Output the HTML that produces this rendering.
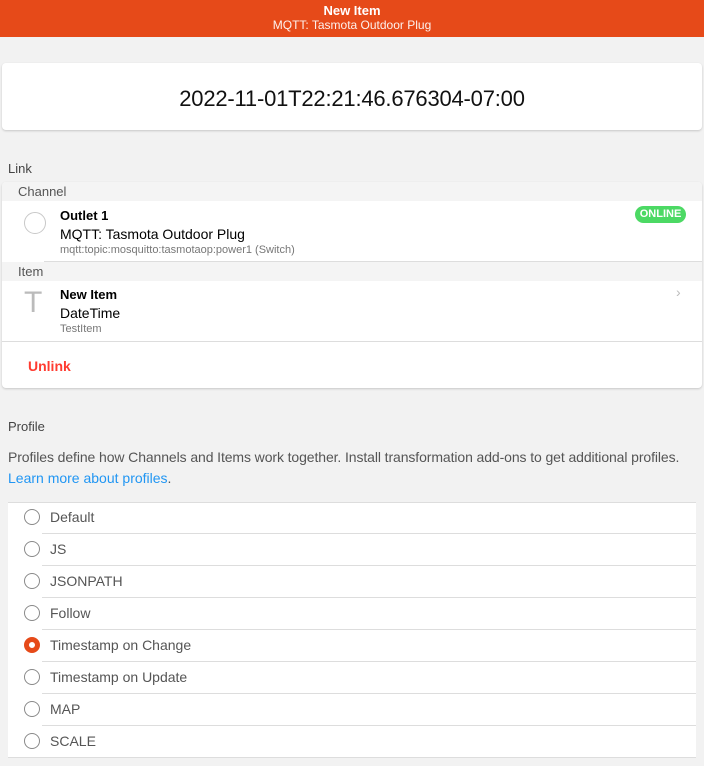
<!DOCTYPE html>
<html><head><meta charset="utf-8"><style>
*{box-sizing:border-box;margin:0;padding:0}
body{width:704px;height:766px;background:#f2f2f2;font-family:"Liberation Sans",sans-serif;position:relative;overflow:hidden;color:#000}
.a{position:absolute;white-space:nowrap}
.hdr{position:absolute;left:0;top:0;width:704px;height:37px;background:#e64a19;color:#fff;text-align:center}
.card{position:absolute;background:#fff;border-radius:4px;box-shadow:0 1px 2px rgba(0,0,0,.18)}
.band{position:absolute;left:0;width:700px;height:19px;background:#f4f4f4;font-size:13px;color:#555;padding-left:16px;line-height:20px}
.rad{position:absolute;left:24px;width:16px;height:16px;border:1.5px solid #8a8a8a;border-radius:50%}
.row{position:absolute;left:42px;width:654px;height:32px;border-bottom:1px solid #ddd;font-size:14px;color:#555;line-height:31px;padding-left:8px}
</style></head><body>
<div class="hdr"><div style="font-size:13px;font-weight:bold;padding-top:3px;line-height:15px">New Item</div><div style="font-size:12px;line-height:14px;opacity:.92">MQTT: Tasmota Outdoor Plug</div></div>
<div class="card" style="left:2px;top:63px;width:700px;height:67px"><div style="text-align:center;font-size:22px;line-height:71px;color:#111;letter-spacing:-0.2px">2022-11-01T22:21:46.676304-07:00</div></div>
<div class="a" style="left:8px;top:161px;font-size:13px;color:#444">Link</div>
<div class="card" style="left:2px;top:182px;width:700px;height:206px;overflow:hidden">
 <div class="band" style="top:0">Channel</div>
 <div class="a" style="left:22px;top:30px;width:22px;height:22px;border:1.5px solid #c8c8c8;border-radius:50%"></div>
 <div class="a" style="left:58px;top:26px;font-size:13px;font-weight:bold">Outlet 1</div>
 <div class="a" style="left:58px;top:44px;font-size:14px">MQTT: Tasmota Outdoor Plug</div>
 <div class="a" style="left:58px;top:62px;font-size:11px;color:#777">mqtt:topic:mosquitto:tasmotaop:power1 (Switch)</div>
 <div class="a" style="left:633px;top:24px;width:51px;height:17px;background:#4cd964;border-radius:9px;color:#fff;font-size:11px;font-weight:bold;text-align:center;line-height:17px">ONLINE</div>
 <div class="a" style="left:42px;top:79px;width:658px;height:1px;background:#ddd"></div>
 <div class="band" style="top:80px">Item</div>
 <div class="a" style="left:22px;top:104px;font-size:30px;color:#bbb;font-weight:300">T</div>
 <div class="a" style="left:58px;top:105px;font-size:13px;font-weight:bold">New Item</div>
 <div class="a" style="left:58px;top:123px;font-size:14px">DateTime</div>
 <div class="a" style="left:58px;top:141px;font-size:11px;color:#777">TestItem</div>
 <div class="a" style="left:674px;top:102px;font-size:14px;color:#bbb">›</div>
 <div class="a" style="left:0;top:159px;width:700px;height:1px;background:#ddd"></div>
 <div class="a" style="left:26px;top:176px;font-size:14px;font-weight:bold;color:#ff3b30">Unlink</div>
</div>
<div class="a" style="left:8px;top:419px;font-size:13px;color:#444">Profile</div>
<div class="a" style="left:8px;top:449px;font-size:14px;color:#555;letter-spacing:-0.1px">Profiles define how Channels and Items work together. Install transformation add-ons to get additional profiles.</div>
<div class="a" style="left:8px;top:470px;font-size:14px;color:#2196f3">Learn more about profiles<span style="color:#555">.</span></div>
<div class="a" style="left:8px;top:502px;width:688px;height:256px;background:#fff;border-top:1px solid #ddd;border-bottom:1px solid #ddd"></div>
<div class="rad" style="top:509px"></div><div class="row" style="top:502px">Default</div>
<div class="rad" style="top:541px"></div><div class="row" style="top:534px">JS</div>
<div class="rad" style="top:573px"></div><div class="row" style="top:566px">JSONPATH</div>
<div class="rad" style="top:605px"></div><div class="row" style="top:598px">Follow</div>
<div class="rad" style="top:637px;border:5px solid #e64a19"></div><div class="row" style="top:630px">Timestamp on Change</div>
<div class="rad" style="top:669px"></div><div class="row" style="top:662px">Timestamp on Update</div>
<div class="rad" style="top:701px"></div><div class="row" style="top:694px">MAP</div>
<div class="rad" style="top:733px"></div><div class="row" style="top:726px;border-bottom:none">SCALE</div>
</body></html>
